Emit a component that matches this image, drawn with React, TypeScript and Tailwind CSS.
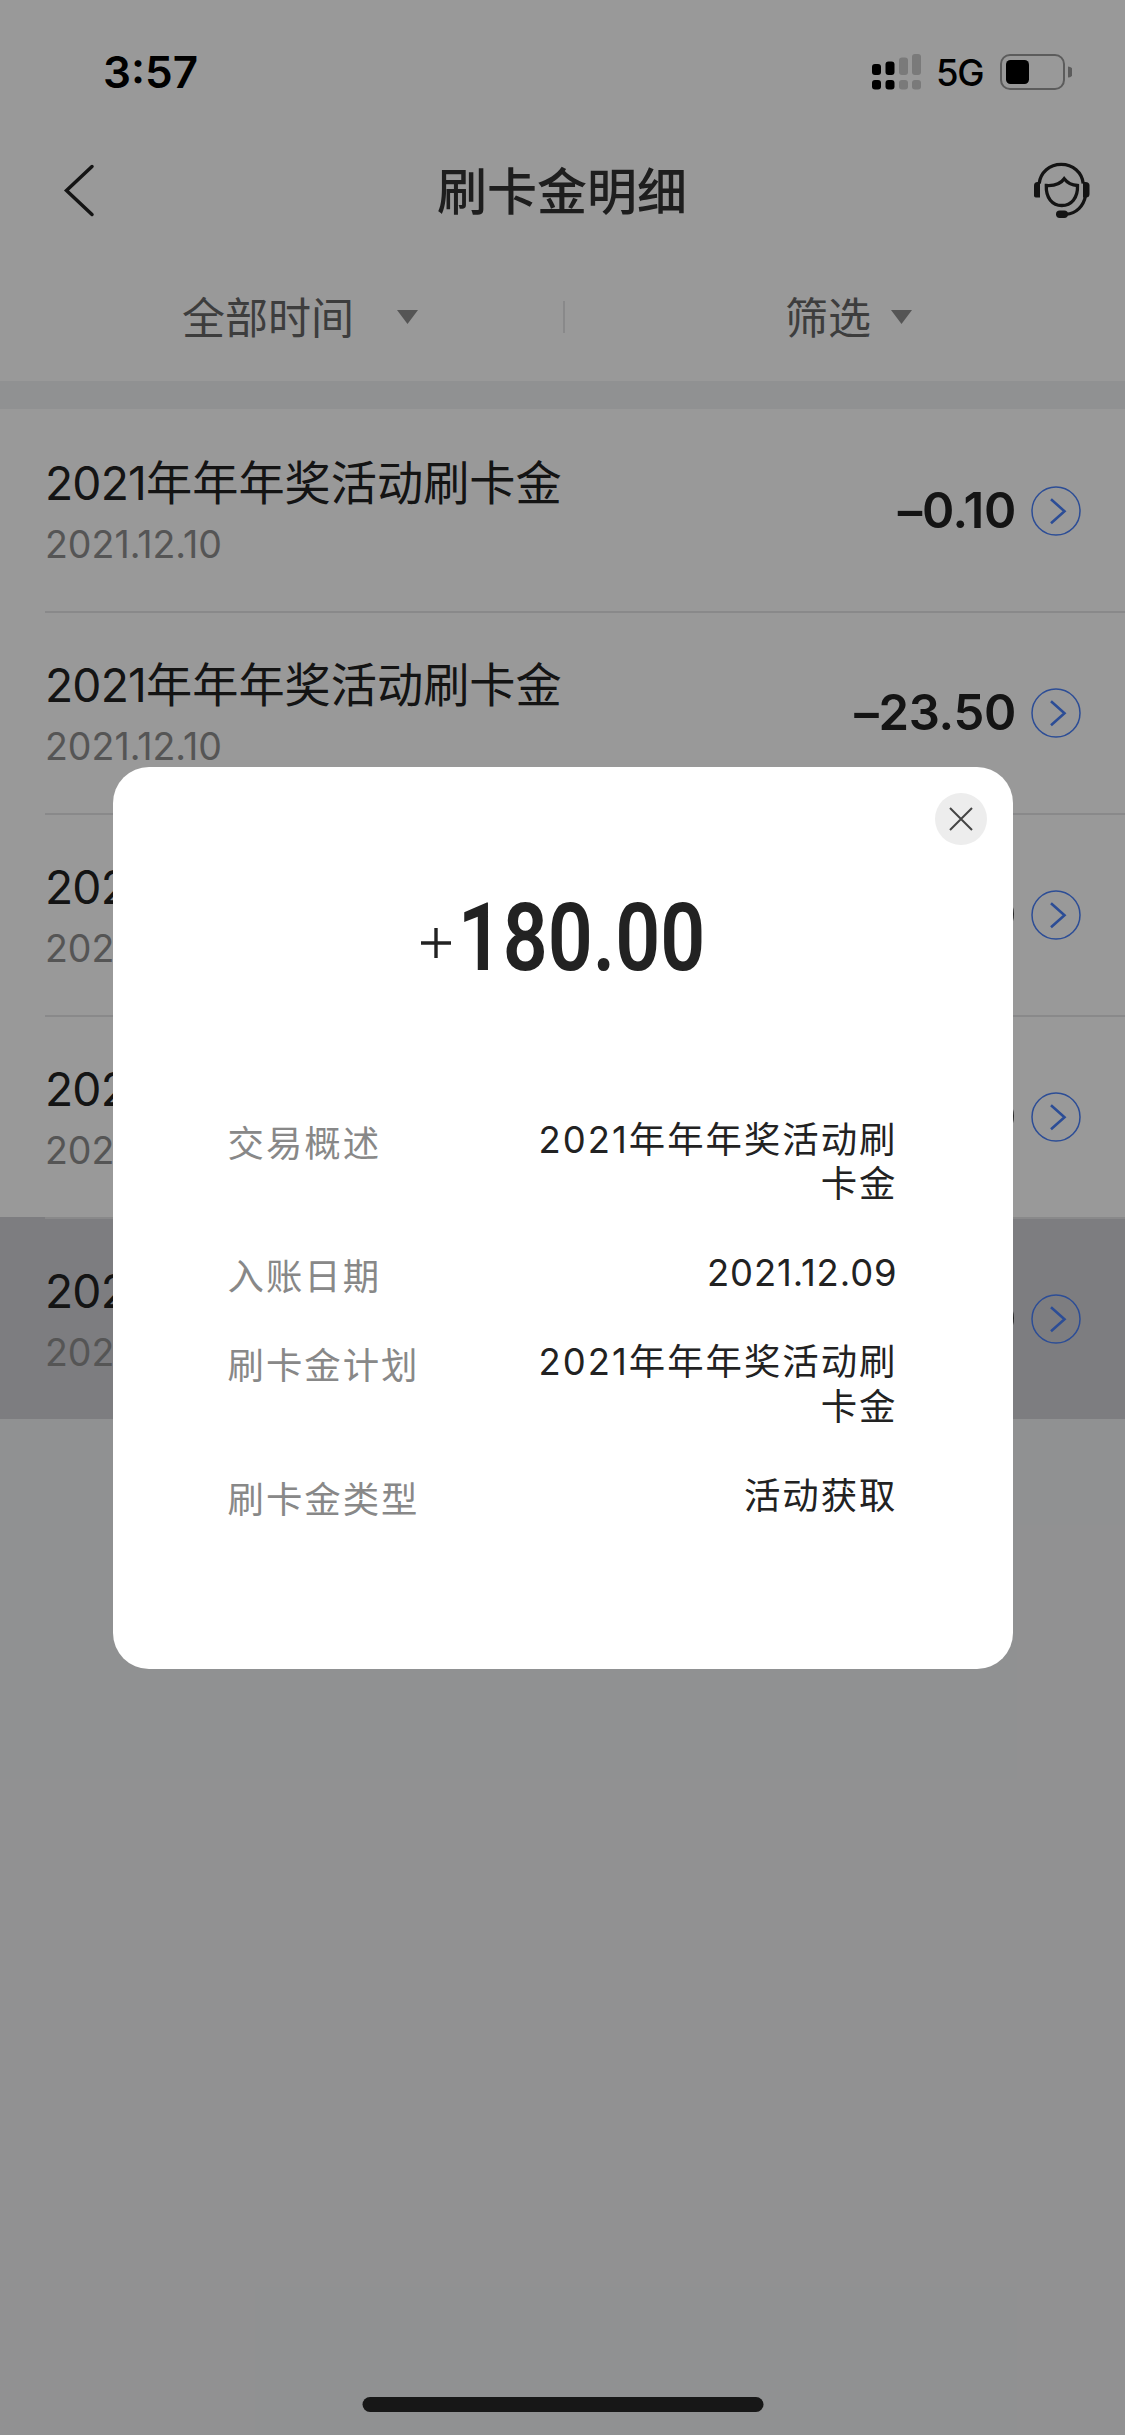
import { useState } from "react";

type Entry = {
  title: string;
  date: string;
  amount: string;
};

const entries: Entry[] = [
  { title: "2021年年年奖活动刷卡金", date: "2021.12.10", amount: "–0.10" },
  { title: "2021年年年奖活动刷卡金", date: "2021.12.10", amount: "–23.50" },
  { title: "2021年年年奖活动刷卡金", date: "2021.12.10", amount: "–10.00" },
  { title: "2021年年年奖活动刷卡金", date: "2021.12.09", amount: "+20.00" },
  { title: "2021年年年奖活动刷卡金", date: "2021.12.09", amount: "+180.00" },
];

const details = [
  { label: "交易概述", value: "2021年年年奖活动刷卡金" },
  { label: "入账日期", value: "2021.12.09", numeric: true },
  { label: "刷卡金计划", value: "2021年年年奖活动刷卡金" },
  { label: "刷卡金类型", value: "活动获取" },
];

const StatusBar = () => (
  <div className="flex h-[132px] items-start justify-between pl-[103px] pr-[53px] pt-[54px] text-black">
    <span className="text-[44px] font-semibold leading-[36px]">3:57</span>
    <div className="flex h-[36px]">
      <svg width="49" height="36" viewBox="0 0 49 36">
        <rect x="0" y="10" width="9" height="11" rx="3" />
        <rect x="13.5" y="7.5" width="9" height="13.5" rx="3" />
        <g fill="#cbcbcb">
          <rect x="27" y="3.5" width="9" height="17.5" rx="3" />
          <rect x="40" y="0" width="9" height="21" rx="3" />
          <rect x="27" y="26" width="9" height="9.5" rx="3" />
          <rect x="40" y="26" width="9" height="9.5" rx="3" />
        </g>
        <rect x="0" y="26" width="9" height="9.5" rx="3" />
        <rect x="13.5" y="26" width="9" height="9.5" rx="3" />
      </svg>
      <span className="ml-[15px] w-[49px] text-[36.5px] font-medium leading-[38px] tracking-[-1.2px]">
        5G
      </span>
      <svg className="ml-[15px]" width="72" height="36" viewBox="0 0 72 36">
        <rect x="1" y="1" width="63" height="34" rx="9" fill="none" stroke="#999" strokeWidth="2" />
        <rect x="6" y="6" width="23" height="24" rx="4.5" />
        <path d="M68 12.5a5.5 5.5 0 0 1 0 11z" fill="#999" />
      </svg>
    </div>
  </div>
);

const HeadsetIcon = () => (
  <svg className="-mt-[2px] overflow-visible" width="56" height="56" viewBox="0 0 56 56" fill="none" stroke="#222" strokeWidth="3.3">
    <path d="M5.2 21.5C6.5 10.5 15.5 2.4 27.2 2.4S48 10.5 49.2 21.5" />
    <path d="M51.5 34C49.5 44 42.5 51.5 32 52.3" />
    <path d="M12.3 23.5C17.5 23.8 26 23 30.2 16.8C33.4 21 38 23.3 43.5 23.5C44 36 37.3 43.5 27.8 43.5S11.8 36 12.3 23.5z" />
    <g fill="#222" stroke="none">
      <path d="M3.5 20H6V35.5H1.8Q0 35.5 0 33.5V23.5Q0 20 3.5 20z" />
      <path d="M49 20H51.5Q55.5 20 55.5 23.5V32Q55.5 35.5 52 35.5H49z" />
      <rect x="22" y="48.5" width="12" height="7.5" rx="3.7" />
    </g>
  </svg>
);

const Caret = ({ className = "" }: { className?: string }) => (
  <svg className={className} width="21" height="14" viewBox="0 0 21 14" fill="#8e8e8e">
    <path d="M0 0h21L10.5 14z" />
  </svg>
);

const CircleArrow = () => (
  <svg width="50" height="50" viewBox="0 0 50 50" fill="none" stroke="#4a80fa">
    <circle cx="25" cy="25" r="24" strokeWidth="1.5" />
    <path d="M20 13.2L33.5 25.3L20 37.3" strokeWidth="2.6" />
  </svg>
);

const Row = ({ entry, active, first }: { entry: Entry; active: boolean; first: boolean }) => (
  <div className={active ? "h-[202px] bg-[#d1d1d6] pl-[45px]" : "h-[202px] bg-white pl-[45px]"}>
    <div
      className={
        first
          ? "flex h-full items-center justify-between border-t-2 border-transparent pr-[44px]"
          : "flex h-full items-center justify-between border-t-2 border-[#e4e4e6] pr-[44px]"
      }
    >
      <div className="flex flex-col pt-1">
        <span className="text-[46.2px] leading-[62px] text-[#222]">
          <span className="tracking-[-0.8px]">{entry.title.slice(0, 4)}</span>
          {entry.title.slice(4)}
        </span>
        <span className="pt-[2px] text-[37.5px] leading-[58px] text-[#8e8e8e]">
          {entry.date}
        </span>
      </div>
      <div className="flex items-center gap-[15px]">
        <span className="text-[49px] font-[570] leading-[50px] tracking-[-0.3px] text-[#222]">
          {entry.amount}
        </span>
        <CircleArrow />
      </div>
    </div>
  </div>
);

const DetailModal = ({ onClose }: { onClose: () => void }) => (
  <div className="relative flex h-[902px] w-[900px] flex-col rounded-[36px] bg-white px-[115px]">
    <button
      onClick={onClose}
      className="absolute right-[26px] top-[26px] grid size-[52px] place-items-center rounded-full bg-[#ededed]"
    >
      <svg width="24" height="24" viewBox="0 0 24 24" stroke="#444" strokeWidth="2">
        <path d="M1 1L23 23M23 1L1 23" />
      </svg>
    </button>
    <div className="mt-[123px] flex h-[96px] pl-[193px] text-[#222]">
      <svg className="mt-[38px]" width="30" height="30" viewBox="0 0 30 30" stroke="#222" strokeWidth="3.4">
        <path d="M0 15H30M15 0V30" />
      </svg>
      <span className="w-[250px] origin-left scale-x-[0.83] whitespace-nowrap pl-[8px] font-['Roboto'] text-[95px] font-semibold leading-[96px]">
        180.00
      </span>
    </div>
    <div className="mt-[132px] flex flex-col gap-[44.5px] text-[36.4px] leading-[44.5px] tracking-[2px]">
      {details.map((item) => (
        <div key={item.label} className="flex items-start justify-between">
          <span className="-mb-[4px] pt-[4px] text-[#888]">{item.label}</span>
          <span
            className={
              item.numeric
                ? "w-[364px] text-right tracking-[0.9px] text-[#222]"
                : "w-[364px] text-right text-[#222]"
            }
          >
            {item.value}
          </span>
        </div>
      ))}
    </div>
  </div>
);

export default function App() {
  const [open, setOpen] = useState(true);

  return (
    <div className="relative h-[2435px] w-[1125px] overflow-hidden bg-[#f1f2f4] font-['Inter','Noto_Sans_CJK_SC',sans-serif]">
      <div className="bg-white">
        <StatusBar />
        <div className="flex h-[117px] items-center justify-between pl-[62px] pr-[35px]">
          <svg className="overflow-visible" width="30" height="54" viewBox="0 0 30 54" fill="none" stroke="#222" strokeWidth="3.5" strokeLinecap="round">
            <path d="M30 2.5L4.5 26.5L30 50.5" />
          </svg>
          <h1 className="pr-[2px] pt-[3px] text-[50px] font-medium leading-[60px] text-[#333]">
            刷卡金明细
          </h1>
          <HeadsetIcon />
        </div>
        <div className="flex h-[132px] items-center pt-[3px] text-[43px] text-[#666]">
          <div className="flex w-[563px] items-center justify-center pl-[37px]">
            <span className="pt-[3px]">全部时间</span>
            <Caret className="ml-[43px]" />
          </div>
          <div className="h-[32px] w-[2px] bg-[#e4e4e6]" />
          <div className="flex w-[560px] items-center justify-center pl-[7px]">
            <span className="pt-[3px]">筛选</span>
            <Caret className="ml-[20px]" />
          </div>
        </div>
      </div>
      <div className="mt-[28px]">
        {entries.map((entry, i) => (
          <Row key={i} entry={entry} active={i === 4} first={i === 0} />
        ))}
      </div>
      {open && (
        <div className="absolute inset-0 flex items-center justify-center bg-black/40">
          <DetailModal onClose={() => setOpen(false)} />
        </div>
      )}
      <div className="absolute bottom-[23px] left-1/2 h-[15px] w-[401px] -translate-x-1/2 rounded-full bg-[#171717]" />
    </div>
  );
}
